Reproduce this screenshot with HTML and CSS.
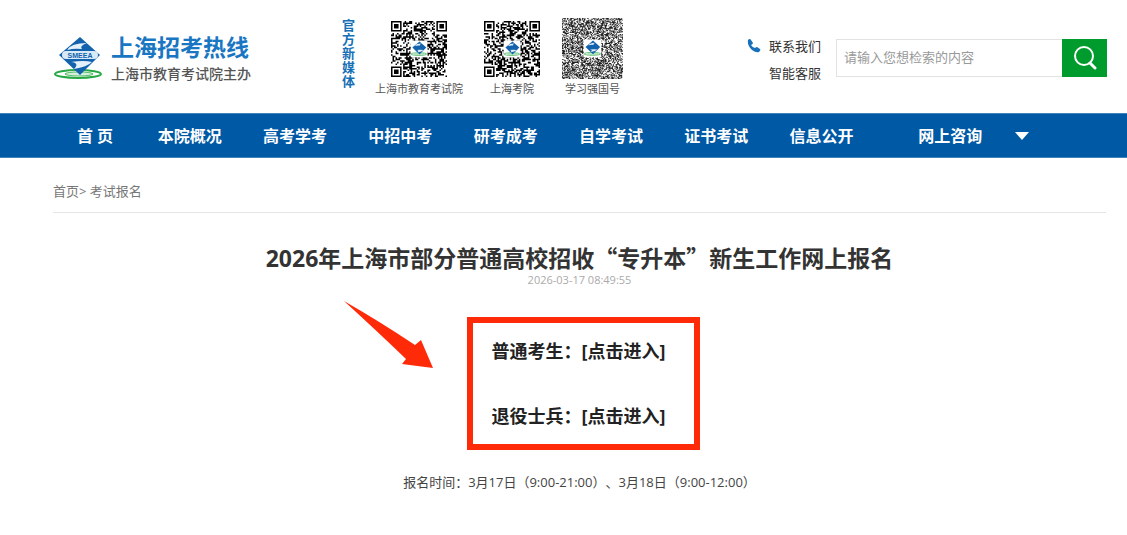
FILE: index.html
```
<!DOCTYPE html>
<html lang="zh-CN">
<head>
  <meta charset="UTF-8" />
  <meta name="viewport" content="width=device-width, initial-scale=1.0"/>
  <title>上海招考热线</title>
  <link rel="stylesheet" href="styles.css">
</head>
<body>
  <header class="header">
    <a class="logo" href="#" aria-label="上海招考热线">
      <svg class="logo-mark" viewBox="0 0 49 44">
        <g id="emblem">
          <ellipse cx="24" cy="37" rx="23" ry="4" fill="#fff" stroke="#27a844" stroke-width="2"/>
          <ellipse cx="25" cy="37" rx="14" ry="2" fill="#d5efda" stroke="#55bd68" stroke-width="1"/>
          <path d="M26 0L46 18L26 38L5 18Z" fill="#1262ad"/>
          <path d="M33 6Q17 6 13 13Q20 11 28 12Q25 9 33 6Z" fill="#e4f0fa"/>
          <path d="M38 25Q30 23 17 25Q26 26 20 32Q33 30 38 25Z" fill="#e4f0fa"/>
        </g>
        <rect x="8" y="14" width="36" height="8" rx="4" fill="#d9eaf7"/>
        <text x="26" y="21" text-anchor="middle" class="emblem-text">SMEEA</text>
      </svg>
      <span class="logo-text">
        <strong>上海招考热线</strong>
        <span>上海市教育考试院主办</span>
      </span>
    </a>

    <div class="media">
      <div class="media-title">官方新媒体</div>
      <figure class="code">
        <svg class="qr" data-size="37" data-seed="7" data-finders="1"></svg>
        <figcaption>上海市教育考试院</figcaption>
      </figure>
      <figure class="code code-mid">
        <svg class="qr" data-size="37" data-seed="23" data-finders="1"></svg>
        <figcaption>上海考院</figcaption>
      </figure>
      <figure class="code">
        <svg class="qr qr-large" data-size="73" data-seed="41"></svg>
        <figcaption>学习强国号</figcaption>
      </figure>
    </div>

    <div class="tools">
      <div class="contact">
        <svg width="14" height="14" viewBox="0 0 14 14"><path d="M1 1Q3 -1 4 1L6 4Q6 5 4 6Q6 9 8 9Q9 8 10 8L13 10Q14 11 12 13Q9 14 5 11Q0 6 1 1Z" fill="#1670ba"/></svg>
        <div class="contact-links">
          <a href="#">联系我们</a>
          <a href="#">智能客服</a>
        </div>
      </div>
      <form class="search">
        <input type="text" aria-label="检索" placeholder="请输入您想检索的内容">
        <button type="button" aria-label="搜索">
          <svg width="24" height="24" viewBox="0 0 24 24" fill="none" stroke="#fff" stroke-width="2" stroke-linecap="round"><circle cx="11" cy="10" r="9"/><path d="M17 17L22 22" stroke-width="3"/></svg>
        </button>
      </form>
    </div>
  </header>

  <nav class="nav">
    <a href="#">首 页</a>
    <a href="#">本院概况</a>
    <a href="#">高考学考</a>
    <a href="#">中招中考</a>
    <a href="#">研考成考</a>
    <a href="#">自学考试</a>
    <a href="#">证书考试</a>
    <a href="#">信息公开</a>
    <a class="nav-more" href="#">网上咨询 <span class="caret"></span></a>
  </nav>

  <main class="content">
    <div class="crumbs"><a href="#">首页</a>&gt; <a href="#">考试报名</a></div>
    <h1>2026年上海市部分普通高校招收<span class="cjk-quote">“</span>专升本<span class="cjk-quote">”</span>新生工作网上报名</h1>
    <time datetime="2026-03-17T08:49:55">2026-03-17 08:49:55</time>

    <div class="entry">
      <svg class="arrow" width="90" height="68" viewBox="0 0 90 68"><path d="M0 0Q35 20 71 44L77 39L89 67L58 63L62 58Q34 31 0 0Z" fill="#ff2a08"/></svg>
      <p>普通考生：<a href="#">[点击进入]</a></p>
      <p>退役士兵：<a href="#">[点击进入]</a></p>
    </div>

    <p class="period">报名时间：3月17日（9:00-21:00）、3月18日（9:00-12:00）</p>
  </main>

  <script>
    // square codes with the emblem in the middle
    document.querySelectorAll('.qr').forEach(svg => {
      const n = Number(svg.dataset.size);
      let seed = Number(svg.dataset.seed);
      const random = () => (seed = (seed * 16807) % 2147483647) / 2147483647;
      for (let i = 0; i < 10; i++) random();

      let d = '';
      for (let y = 0; y < n; y++) {
        for (let x = 0; x < n; x++) {
          const corner = svg.dataset.finders &&
            ((x < 8 && y < 8) || (x > n - 9 && y < 8) || (x < 8 && y > n - 9));
          if (random() < 0.52 && !corner) d += `M${x} ${y}h1v1h-1z`;
        }
      }

      let finders = '';
      if (svg.dataset.finders) {
        [[0, 0], [n - 7, 0], [0, n - 7]].forEach(([x, y]) => {
          finders += `<path fill-rule="evenodd" d="M${x} ${y}h7v7h-7zM${x + 1} ${y + 1}v5h5v-5zM${x + 2} ${y + 2}h3v3h-3z"/>`;
        });
      }

      const box = Math.round(n * 0.29);
      const pos = (n - box) / 2;
      svg.setAttribute('viewBox', `0 0 ${n} ${n}`);
      svg.innerHTML = `<path d="${d}"/>${finders}
        <rect x="${pos}" y="${pos}" width="${box}" height="${box}" fill="#fff"/>
        <use href="#emblem" transform="translate(${pos} ${pos + box * 0.05}) scale(${box / 49})"/>`;
    });
  </script>
</body>
</html>
```
FILE: styles.css
```
* {
  box-sizing: border-box;
}

body {
  margin: 0;
  background: #fff;
  color: #333;
  font-family: "Open Sans", "Noto Sans CJK SC", sans-serif;
  font-size: 13px;
  text-spacing-trim: space-all;
}

a {
  color: inherit;
  text-decoration: none;
}

svg {
  display: block;
  flex-shrink: 0;
}

.emblem-text {
  font: bold 7px "Liberation Sans", sans-serif;
  fill: #1262ad;
}

.header {
  display: flex;
  align-items: flex-start;
  height: 113px;
  padding: 18px 20px 0 54px;
}

.logo {
  display: flex;
  gap: 8px;
  padding-top: 14px;
}

.logo-mark {
  width: 49px;
  height: 44px;
  margin-top: 5px;
}

.logo-text {
  display: flex;
  flex-direction: column;
  color: #555;
  font-size: 14px;
  font-weight: 500;
  line-height: 24px;
  white-space: nowrap;
}

.logo-text strong {
  color: #1976c2;
  font-size: 23px;
  font-weight: bold;
  line-height: 30px;
}

.media {
  display: flex;
  margin-left: 91px;
}

.media-title {
  width: 14px;
  color: #1670b5;
  font-size: 13px;
  font-weight: bold;
  line-height: 14px;
}

.code {
  display: flex;
  flex-direction: column;
  align-items: center;
  justify-content: flex-end;
  height: 80px;
  margin: 0 0 0 19px;
}

.code-mid {
  width: 56px;
  margin: 0 22px 0 21px;
}

.code + .code:last-child {
  margin-left: 0;
}

.code figcaption {
  color: #555;
  font-size: 11px;
  line-height: 18px;
  white-space: nowrap;
}

.qr {
  width: 56px;
  height: 56px;
  margin-bottom: 3px;
}

.qr-large {
  width: 61px;
  height: 61px;
  margin-bottom: 1px;
  fill: #222;
}

.tools {
  display: flex;
  align-items: flex-start;
  gap: 15px;
  margin-left: auto;
  padding-top: 15px;
}

.contact {
  display: flex;
  gap: 8px;
}

.contact > svg {
  margin-top: 6px;
}

.contact-links {
  display: flex;
  flex-direction: column;
  line-height: 27px;
  white-space: nowrap;
}

.search {
  display: flex;
  height: 38px;
  margin-top: 6px;
}

.search input {
  width: 226px;
  padding: 0 7px 2px;
  border: 1px solid #e2e2e2;
  border-right: none;
  font-family: inherit;
  font-size: 13px;
  outline: none;
}

.search input::placeholder {
  color: #999;
}

.search button {
  display: flex;
  align-items: center;
  justify-content: center;
  width: 45px;
  padding: 0;
  border: none;
  background: #009b2d;
  cursor: pointer;
}

.nav {
  display: grid;
  grid-template-columns: 84px repeat(7, 10fr) 22fr;
  padding: 1px 21px 0 53px;
  background: #0059a5;
  border-top: 1px solid #3f83bd;
  border-bottom: 1px solid #3f83bd;
  color: #fff;
  font-size: 16px;
  font-weight: bold;
  line-height: 42px;
  text-align: center;
  white-space: nowrap;
}

.nav-more {
  display: flex;
  align-items: center;
  gap: 33px;
  padding-left: 44px;
}

.caret {
  border: 7px solid transparent;
  border-top: 8px solid #fff;
  border-bottom: none;
}

.content {
  padding: 0 21px 0 53px;
  text-align: center;
}

.crumbs {
  padding: 21px 0 9px;
  border-bottom: 1px solid #e6e6e6;
  color: #777;
  line-height: 24px;
  text-align: left;
}

h1 {
  margin: 29px 0 0;
  font-size: 23px;
  line-height: 30px;
}

.cjk-quote {
  font-family: "Noto Sans CJK SC", sans-serif;
}

time {
  display: block;
  color: #aaa;
  font-size: 11px;
  line-height: 14px;
}

.entry {
  position: relative;
  width: fit-content;
  margin: 30px auto 0;
  padding: 12px 29px 12px 19px;
  border: 6px solid #ff2a08;
  left: 4px;
  color: #222;
  font-size: 18px;
  font-weight: bold;
  line-height: 32px;
}

.entry p {
  margin: 0;
}

.entry p + p {
  margin-top: 33px;
}

.arrow {
  position: absolute;
  top: -22px;
  left: -129px;
}

.period {
  margin: 20px 0 0;
  color: #444;
  line-height: 24px;
}
```
